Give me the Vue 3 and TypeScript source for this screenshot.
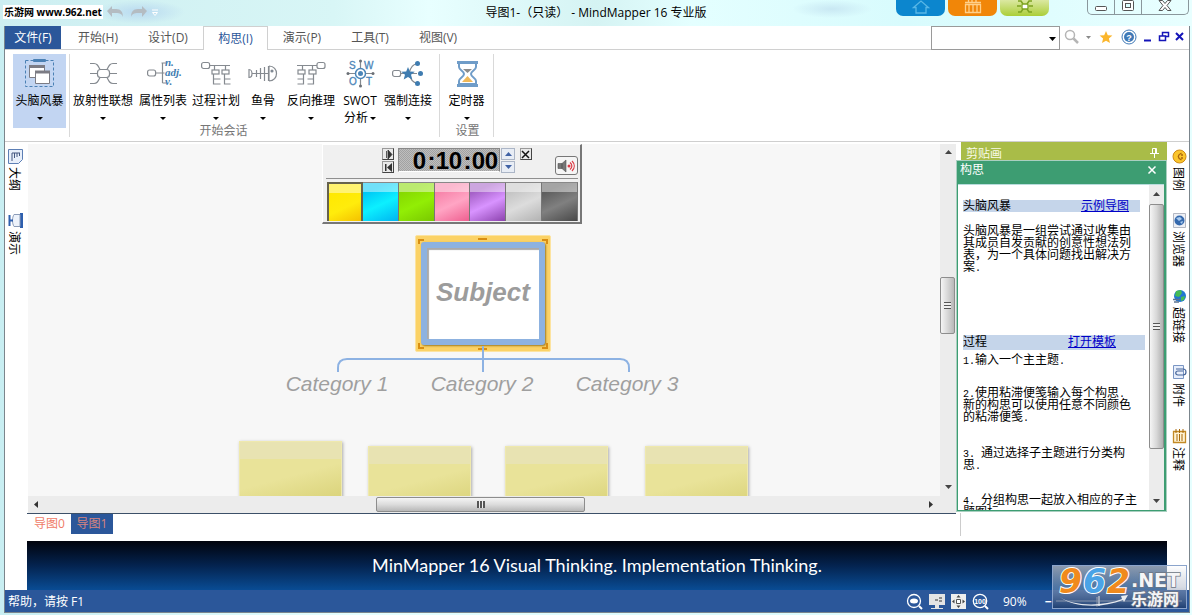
<script setup lang="ts">
interface RibbonItem {
  id: string
  label: string
  second?: string
  width: number
}

const tabs: { label: string; width: number; active?: boolean }[] = [
  { label: '开始(H)', width: 70 },
  { label: '设计(D)', width: 70 },
  { label: '构思(I)', width: 65, active: true },
  { label: '演示(P)', width: 68 },
  { label: '工具(T)', width: 68 },
  { label: '视图(V)', width: 68 },
]

const sessionItems: RibbonItem[] = [
  { id: 'radial', label: '放射性联想', width: 66 },
  { id: 'attr', label: '属性列表', width: 54 },
  { id: 'process', label: '过程计划', width: 52 },
  { id: 'fish', label: '鱼骨', width: 42 },
  { id: 'reverse', label: '反向推理', width: 54 },
  { id: 'swot', label: 'SWOT', second: '分析', width: 44 },
  { id: 'force', label: '强制连接', width: 52 },
]

const clock: { ch: string; kind: string }[] = [
  { ch: '', kind: 'digit' },
  { ch: '0', kind: 'digit' },
  { ch: ':', kind: 'colon' },
  { ch: '1', kind: 'digit' },
  { ch: '0', kind: 'digit' },
  { ch: ':', kind: 'colon' },
  { ch: '0', kind: 'digit' },
  { ch: '0', kind: 'digit' },
]

const swatches: { name: string; cls: string }[] = [
  { name: '黄色', cls: 'yellow' },
  { name: '青色', cls: 'cyan' },
  { name: '绿色', cls: 'green' },
  { name: '粉色', cls: 'pink' },
  { name: '紫色', cls: 'purple' },
  { name: '浅灰', cls: 'light' },
  { name: '深灰', cls: 'dark' },
]

const notes = [
  { x: 211, y: 297 },
  { x: 340, y: 302 },
  { x: 477, y: 302 },
  { x: 617, y: 302 },
]

const categories = [
  { label: 'Category 1', x: 309 },
  { label: 'Category 2', x: 454 },
  { label: 'Category 3', x: 599 },
]
</script>

<template>
  <div class="app">
    <header class="titlebar">
      <span class="mark">乐游网 www.962.net</span>
      <svg class="undo" width="60" height="16" viewBox="0 0 60 16" aria-hidden="true">
        <path d="M6 5h4c5 0 7 3 7 8-1-3-3-4-7-4H6v4L1 7l5-5z" fill="#b4bcc2" />
        <path d="M36 5h-4c-5 0-7 3-7 8 1-3 3-4 7-4h4v4l5-6-5-5z" fill="#b4bcc2" />
        <path d="M46 6h6M46.500 8.500h5l-2.500 3z" stroke="#fff" fill="none" />
      </svg>
      <h1 class="title">导图1-（只读） - MindMapper 16 专业版</h1>
      <div class="pills">
        <button class="pill blue" aria-label="主页">
          <svg width="18" height="14" viewBox="0 0 18 14"><path d="M1.500 7.500L9 1l7.500 6.500H14V13H4V7.500z" fill="none" stroke="#58b7e6" stroke-width="1.300" /></svg>
        </button>
        <button class="pill orange" aria-label="日历">
          <svg width="18" height="14" viewBox="0 0 18 14"><path d="M1.500 4.500h15v8h-15zM1 2.500h16M4.500 0v3M8 0v3M12 0v3M5 4.500v8M9 4.500v8M13 4.500v8" fill="none" stroke="#ffd08a" stroke-width="1.300" /></svg>
        </button>
        <button class="pill lime" aria-label="导图">
          <svg width="18" height="14" viewBox="0 0 18 14"><path d="M2 1h3l2 3M16 1h-3l-2 3M1 6h4M17 6h-4M2 12h3l2-3M16 12h-3l-2-3" fill="none" stroke="#7da321" stroke-width="1.500" /><rect x="6" y="4" width="6" height="5" rx="1" fill="#fff" stroke="#7da321" stroke-width="1.300" /></svg>
        </button>
      </div>
      <div class="winbtns">
        <button aria-label="最小化"><svg width="14" height="12"><rect x="1.500" y="6.500" width="11" height="4" rx="1" fill="#fff" stroke="#555" /></svg></button>
        <button aria-label="还原"><svg width="14" height="12"><rect x="1.500" y=".5" width="11" height="10" rx="1" fill="#fff" stroke="#555" /><rect x="4.500" y="3.500" width="5" height="4" fill="#dff" stroke="#555" /></svg></button>
        <button aria-label="关闭"><svg width="14" height="12"><path d="M1 .5h3.500L7 3.500 9.500.5H13L9 5.500l4 5H9.500L7 7.500l-2.500 3H1l4-5z" fill="#fff" stroke="#555" /></svg></button>
      </div>
    </header>

    <div class="window">
      <nav class="tabs">
        <button class="file">文件(F)</button>
        <button v-for="t in tabs" :key="t.label" class="tab" :class="{ active: t.active }" :style="{ width: t.width + 'px' }">{{ t.label }}</button>
        <span class="grow"></span>
        <span class="combo">
          <select class="find" aria-label="查找"><option></option></select>
          <svg width="7" height="4"><path d="M0 0h7L3.500 4z" fill="#000" /></svg>
        </span>
        <svg class="tool" width="60" height="20" viewBox="0 0 60 20" aria-hidden="true">
          <circle cx="10" cy="7" r="4.500" fill="none" stroke="#b5b5b5" stroke-width="1.500" />
          <path d="M13.500 10.500L18 15" stroke="#b5b5b5" stroke-width="2.500" />
          <path d="M26 8h5l-2.500 3z" fill="#8a8a8a" />
          <path d="M46 3l1.800 4.200 4.600.4-3.500 3 1.100 4.500-4-2.400-4 2.400 1.100-4.500-3.500-3 4.600-.4z" fill="#fbb62c" />
        </svg>
        <svg class="help" width="16" height="16" viewBox="0 0 16 16" role="img" aria-label="帮助">
          <circle cx="8" cy="8" r="7" fill="#fff" stroke="#3f79b7" /><circle cx="8" cy="8" r="5" fill="#3f79b7" />
          <text x="8" y="11.500" text-anchor="middle" font-size="9" font-weight="700" fill="#fff">?</text>
        </svg>
        <svg class="mdi" width="44" height="14" viewBox="0 0 44 14" aria-hidden="true">
          <path d="M1 10.500h7" stroke="#1414b8" stroke-width="2" />
          <path d="M19.500 2.500h6v4h-6zM19 2.500h7" fill="none" stroke="#1414b8" stroke-width="1.500" />
          <path d="M16.500 6h6v4.500h-6z" fill="#fff" stroke="#1414b8" stroke-width="1.500" />
          <path d="M33 3l7 7M40 3l-7 7" stroke="#1414b8" stroke-width="2" />
        </svg>
      </nav>

      <section class="ribbon">
        <button class="item selected">
          <svg width="32" height="32" viewBox="1 0 32 32">
            <rect x="2.500" y="3.500" width="28" height="26" fill="none" stroke="#4a80b4" stroke-dasharray="3 2" />
            <rect x="10" y="2" width="13" height="3" rx="1" fill="#4a80b4" />
            <path d="M6.500 8.500h15v12h-15z" fill="#fff" stroke="#7c7c84" /><path d="M6 9.500h16" stroke="#7c7c84" stroke-width="3" />
            <path d="M12.500 14.500h14v12h-14z" fill="#fff" stroke="#7c7c84" /><path d="M12 15h15" stroke="#7c7c84" stroke-width="3" />
          </svg>
          <span>头脑风暴</span><i class="caret"></i>
        </button>
        <div class="group">
          <div class="items">
            <button v-for="it in sessionItems" :key="it.id" class="item" :style="{ width: it.width + 'px' }">
              <svg width="32" height="32" viewBox="0 0 32 32" fill="none" stroke="#858a90" stroke-width="1.200">
                <g v-if="it.id === 'radial'">
                  <rect x="10.500" y="12.500" width="12" height="8" rx="3" />
                  <path d="M3 6.500h4c3 0 4 2 6 6M30 6.500h-4c-3 0-4 2-6 6M3 16.500h7M23 16.500h7M3 26.500h4c3 0 4-2 6-6M30 26.500h-4c-3 0-4-2-6-6" />
                </g>
                <g v-else-if="it.id === 'attr'">
                  <rect x=".6" y="13" width="8" height="6" rx="2" />
                  <path d="M9 16h6M15.500 6v20M15.500 6h-1M15.500 6h4M15.500 16h2M15.500 26h4" />
                  <g class="serif" fill="#3f7cb0" stroke="none" font-size="11"><text x="18" y="9">n.</text><text x="18" y="19">adj.</text><text x="18" y="28">v.</text></g>
                </g>
                <g v-else-if="it.id === 'process'">
                  <rect x="1.600" y="5.500" width="8" height="6" rx="2" />
                  <path d="M10 8.500h20M14.500 8v5M25.500 8v5M13.500 17v10h7M13.500 22h7M24.500 17v10h6M24.500 22h6" />
                  <rect x="12" y="13" width="7" height="4" fill="#fff" /><rect x="22" y="13" width="7" height="4" fill="#fff" />
                </g>
                <g v-else-if="it.id === 'fish'">
                  <path d="M2 12.500c4 0 4 8 0 8zM5 16.500h17M9.500 13v7M13.500 11v11M17.500 10v14M21.500 9v15M22 9c10 0 10 15 0 15M22 9v15" />
                  <circle cx="25" cy="14" r="1" fill="#1f5da0" />
                </g>
                <g v-else-if="it.id === 'reverse'">
                  <rect x="22" y="5.500" width="8" height="6" rx="2" />
                  <path d="M2 8.500h20M7.500 8v5M17.500 8v5M8.500 17v10h-6M8.500 22h-6M18.500 17v10h-6M18.500 22h-6" />
                  <rect x="3" y="13" width="7" height="4" fill="#fff" /><rect x="14" y="13" width="7" height="4" fill="#fff" />
                </g>
                <g v-else-if="it.id === 'swot'">
                  <path d="M16.500 3v8M16.500 22v8M3 16.500h8M22 16.500h8" /><circle cx="16.500" cy="16.500" r="5" stroke="#4b85b8" stroke-width="1.500" /><circle cx="16.500" cy="16.500" r="2.500" fill="#4b85b8" stroke="none" />
                  <g fill="#6b7076" stroke="none"><circle cx="16.500" cy="4" r="1.500" /><circle cx="16.500" cy="29" r="1.500" /><circle cx="4" cy="16.500" r="1.500" /><circle cx="29" cy="16.500" r="1.500" /></g>
                  <g class="sans" fill="#4b85b8" stroke="#4b85b8" stroke-width=".3" font-size="10"><text x="5" y="12">S</text><text x="20" y="12">W</text><text x="5" y="28">O</text><text x="22" y="28">T</text></g>
                </g>
                <g v-else>
                  <rect x=".6" y="13.500" width="8" height="6" rx="2" />
                  <path d="M9 16.500h16M17 16c2-7 5-9 8-9M17 17c2 7 5 9 8 9" />
                  <path d="M16 10l1.800 4.500 5 .3-3.800 3 1.300 4.700-4.300-2.600-4.300 2.600 1.300-4.700-3.800-3 5-.3z" fill="#3f7cb0" stroke="none" />
                  <g fill="#3f7cb0" stroke="none"><circle cx="25.500" cy="6.500" r="2.500" /><circle cx="28.500" cy="16.500" r="2.500" /><circle cx="25.500" cy="26.500" r="2.500" /></g>
                </g>
              </svg>
              <span>{{ it.label }}</span>
              <span v-if="it.second" class="second">{{ it.second }}<i class="caret"></i></span>
              <i v-else class="caret"></i>
            </button>
          </div>
          <div class="gname">开始会话</div>
        </div>
        <div class="group narrow">
          <div class="items">
            <button class="item timer">
              <svg width="32" height="32" viewBox="0 0 32 32">
                <path d="M8 6v4c0 3 5 4 5 7s-5 4-5 7v3h17v-3c0-3-5-4-5-7s5-4 5-7V6" fill="#fff" stroke="#6f9cc8" stroke-width="2" />
                <path d="M12 12h9l-4.500 4z" fill="#8c8c8c" /><path d="M11 25h11l-5.500-6z" fill="#f0b858" />
                <path d="M6 5.500h21M6 28.500h21" stroke="#6f9cc8" stroke-width="3" />
              </svg>
              <span>定时器</span><i class="caret"></i>
            </button>
          </div>
          <div class="gname">设置</div>
        </div>
      </section>

      <main class="body">
        <aside class="rail left">
          <button>
            <svg width="15" height="15"><path d="M.5.500h14v10l-4 4H.5z" fill="#e8effa" stroke="#5d7fb5" /><path d="M4 12V4h8M6.500 9V4M9 8V4M11.500 7V4" fill="none" stroke="#44577f" /></svg>
            <span>大纲</span>
          </button>
          <button>
            <svg width="15" height="15"><path d="M12 0h3v15h-3z" fill="#2e5fae" /><path d="M6 1.500h6v12H6c-2-3-2-9 0-12z" fill="#eef3fb" stroke="#8b9cb8" /><path d="M1.500 2v11M1 7.500h4" stroke="#2e5fae" stroke-width="2" /></svg>
            <span>演示</span>
          </button>
        </aside>

        <div class="center">
          <div class="stage">
            <div class="canvas">
              <div class="timerbox">
                <div class="clockrow">
                  <div class="pair">
                    <button class="mini" aria-label="播放"><svg width="9" height="9"><path d="M2.500 1v7M4 0v9l4-4.500z" stroke="#333" fill="#333" stroke-width=".8" /></svg></button>
                    <button class="mini" aria-label="重置"><svg width="9" height="9"><path d="M1 1h1.500v7H1zM8 0v9L3 4.500z" fill="#333" /></svg></button>
                  </div>
                  <div class="lcd"><span v-for="(c, i) in clock" :key="i" :class="c.kind">{{ c.ch }}</span></div>
                  <div class="spin">
                    <button aria-label="增加"><svg width="7" height="4"><path d="M0 4h7L3.500 0z" fill="#3f62a5" /></svg></button>
                    <button aria-label="减少"><svg width="7" height="4"><path d="M0 0h7L3.500 4z" fill="#3f62a5" /></svg></button>
                  </div>
                  <button class="mini close" aria-label="关闭计时器"><svg width="9" height="9"><path d="M1 1l7 7M8 1L1 8" stroke="#111" stroke-width="1.500" /></svg></button>
                  <button class="sound" aria-label="声音">
                    <svg width="18" height="14"><path d="M1 4.500h4v5H1zM5 4.500L9 1v12L5 9.500z" fill="#777" stroke="#555" stroke-width=".6" /><circle cx="12" cy="7" r="1.500" fill="#dc3c46" /><path d="M13 3.500c2.500 2 2.500 5 0 7M15 2c3 3 3 7 0 10" fill="none" stroke="#dc3c46" stroke-width="1.200" /></svg>
                  </button>
                </div>
                <div class="swatches">
                  <button v-for="s in swatches" :key="s.cls" class="swatch" :class="s.cls" :aria-label="s.name"></button>
                </div>
              </div>

              <svg class="links" width="294" height="30" viewBox="0 0 294 30" aria-hidden="true">
                <path d="M1 26v-4q0-9 9-9h273q9 0 9 9v4M146 0v26" fill="none" stroke="#8db2e3" stroke-width="2" />
              </svg>
              <div class="subject">
                <div class="paper">Subject</div>
                <svg class="handles" width="136" height="118" viewBox="0 0 136 118" aria-hidden="true">
                  <path d="M4 9V5h5M127 5h5v4M4 108v5h5M127 113h5v-5M63 4h9M63 114h9" fill="none" stroke="#d98e12" stroke-width="2" />
                </svg>
              </div>
              <span v-for="c in categories" :key="c.label" class="cat" :style="{ left: c.x + 'px' }">{{ c.label }}</span>
              <div v-for="(n, i) in notes" :key="i" class="note" :style="{ left: n.x + 'px', top: n.y + 'px' }"></div>
            </div>
            <div class="vscroll">
              <svg width="7" height="4"><path d="M0 4h7L3.500 0z" fill="#444" /></svg>
              <div class="vtrack"><div class="vthumb"><i class="grip"></i></div></div>
              <svg width="7" height="4"><path d="M0 0h7L3.500 4z" fill="#444" /></svg>
            </div>
          </div>
          <div class="hscroll">
            <svg width="4" height="7"><path d="M4 0v7L0 3.500z" fill="#333" /></svg>
            <div class="htrack"><div class="hthumb"><i class="hgrip"></i></div></div>
            <svg width="4" height="7"><path d="M0 0v7l4-3.500z" fill="#333" /></svg>
          </div>
          <div class="sheets">
            <button>导图0</button><button class="current">导图1</button>
          </div>
        </div>

        <aside class="side">
          <div class="clip"><span>剪贴画</span>
            <svg width="9" height="10"><path d="M2.500.500h4v5h-4zM0 5.500h9M4.500 6v4M5.500 1v4" fill="none" stroke="#fff" /></svg>
          </div>
          <section class="panel">
            <div class="phead"><span>构思</span><button aria-label="关闭构思"><svg width="8" height="8"><path d="M.5.500l7 7M7.500.500l-7 7" stroke="#fff" stroke-width="1.500" /></svg></button></div>
            <div class="pbody">
              <div class="doc">
                <div class="dhead first"><b>头脑风暴</b><a href="#sample">示例导图</a></div>
                <p class="intro">头脑风暴是一组尝试通过收集由<br>其成员自发贡献的创意性想法列<br>表，为一个具体问题找出解决方<br>案<i>.</i></p>
                <div class="dhead second"><b>过程</b><a href="#template">打开模板</a></div>
                <p class="s1"><i>1.</i>输入一个主主题<i>.</i></p>
                <p class="s2"><i>2.</i>使用粘滞便笺输入每个构思<i>.</i><br>新的构思可以使用任意不同颜色<br>的粘滞便笺<i>.</i></p>
                <p class="s3"><i>3. </i>通过选择子主题进行分类构<br>思<i>.</i></p>
                <p class="s4"><i>4. </i>分组构思一起放入相应的子主<br>题图标<i>.</i></p>
              </div>
              <div class="pscroll">
                <svg width="7" height="4"><path d="M0 4h7L3.500 0z" fill="#444" /></svg>
                <div class="ptrack"><div class="pthumb"><i class="grip"></i></div></div>
                <svg width="7" height="4"><path d="M0 0h7L3.500 4z" fill="#444" /></svg>
              </div>
            </div>
          </section>
          <div class="tail"></div>
        </aside>

        <aside class="rail right">
          <button>
            <svg width="15" height="15"><circle cx="7.500" cy="7.500" r="6.500" fill="#fbc52c" stroke="#cf8a12" /><path d="M9.500 4Q3 7.500 9.500 11" fill="none" stroke="#a9640c" stroke-width="1.300" /><path d="M9 6h2M9 9h2" stroke="#a9640c" stroke-width="1.300" /></svg>
            <span>图例</span>
          </button>
          <button>
            <svg width="15" height="15"><path d="M1.500.500h12v14h-12z" fill="#eef0f5" stroke="#b3b7c2" /><circle cx="7.500" cy="7.500" r="5" fill="#3569ad" /><path d="M4 5l4-1 2 2-3 2zM8 9l3-1-1 3z" fill="#a9cbef" /></svg>
            <span>浏览器</span>
          </button>
          <button>
            <svg width="15" height="15"><circle cx="8" cy="7" r="6" fill="#2176d2" /><path d="M4 2l5-1 1 3-3 4-4-1zM9 8l4-1-1 4-3 1z" fill="#45bb55" /><path d="M1 10.500h7M2 13h5" stroke="#5a718f" stroke-width="1.500" /></svg>
            <span>超链接</span>
          </button>
          <button>
            <svg width="15" height="15"><path d="M1.500.500h10v13h-10z" fill="#e7eefb" stroke="#7a96c4" /><path d="M4 4h7c4 0 4 6 0 6H6c-3 0-3-4 0-4h5" fill="none" stroke="#46659a" stroke-width="1.200" /></svg>
            <span>附件</span>
          </button>
          <button>
            <svg width="15" height="15"><path d="M1.500 2.500h12v11h-12z" fill="#fff3d4" stroke="#c38a26" stroke-width="1.300" /><path d="M4 0v4M7.500 0v4M11 0v4M5 5v7M7.500 5v7M10 5v7" stroke="#a8690a" /></svg>
            <span>注释</span>
          </button>
        </aside>
      </main>

      <div class="bannerwrap"><div class="banner">MinMapper 16 Visual Thinking. Implementation Thinking.</div></div>

      <footer class="status">
        <span class="grow">帮助，请按 F1</span>
        <svg width="84" height="18" viewBox="0 0 84 18" aria-hidden="true">
          <g fill="none" stroke="#fff" stroke-width="1.300"><circle cx="8" cy="8" r="6.500" /><path d="M13 13l3 3" stroke-width="2" /></g>
          <ellipse cx="8" cy="8" rx="4" ry="2.500" fill="#fff" />
          <path d="M23 1h16v11H23zM29 12h4v3h4v1H25v-1h4z" fill="#e4e4e4" /><path d="M29 7h3M33 5h3M33 8h3" stroke="#333" />
          <path d="M45 1h15v15H45z" fill="#eee" /><path d="M50.500 6.500h4v4h-4z" fill="#fff" stroke="#555" /><path d="M52.500 2l2 2.500h-4zM52.500 15l2-2.500h-4zM46 8.500l2.500-2v4zM59 8.500l-2.500-2v4z" fill="#444" />
          <g fill="none" stroke="#fff" stroke-width="1.300"><circle cx="74" cy="8" r="6.700" /><path d="M79 13l3 3" stroke-width="2" /></g>
          <text x="74" y="11" text-anchor="middle" class="hund">100</text>
        </svg>
        <output class="pct">90%</output>
        <label class="zoom"><span>−</span><input type="range" min="0" max="100" value="34" aria-label="缩放"></label>
      </footer>
    </div>

    <svg class="logo" width="136" height="45" viewBox="0 0 136 45" role="img" aria-label="962.NET 乐游网">
      <defs>
        <linearGradient id="lg" x1="0" y1="0" x2="0" y2="1"><stop offset="0" stop-color="#fff" stop-opacity=".55" /><stop offset=".5" stop-color="#a7b0c2" stop-opacity=".45" /><stop offset="1" stop-color="#17335f" stop-opacity=".7" /></linearGradient>
      </defs>
      <rect x=".5" y=".5" width="134" height="43" fill="url(#lg)" stroke="#8ba4cc" />
      <path d="M4 36h126" stroke="#8593ab" /><path d="M46 31h2v10h-2z" fill="#9ba8bd" />
      <path d="M8 32c12 9 42 10 62 2l-1-3 7-1-4 7-1-2c-22 9-51 7-63-3z" fill="#e8ebf0" />
      <g class="dejavu" font-weight="700" font-style="italic" font-size="33" stroke="#fff" stroke-width="2" paint-order="stroke">
        <text x="7" y="28" fill="#f08a1d">9</text><text x="31" y="28" fill="#4aa3e6">6</text><text x="55" y="28" fill="#f08a1d">2</text>
      </g>
      <g class="dejavu" font-weight="700" fill="#f4f5f7" stroke="#6c7584" stroke-width="1.500" paint-order="stroke">
        <text x="79" y="22" font-size="19">.NET</text><text x="79" y="40" font-size="16">乐游网</text>
      </g>
    </svg>
  </div>
</template>

<style>
html, body { height: 100%; }
body { margin: 0; background: #dcf6f8; }
</style>

<style scoped>
* { box-sizing: border-box; }
.app {
  position: relative; height: 100vh; min-height: 580px; display: flex; flex-direction: column; overflow: hidden;
  padding: 0 2px 2px 4px; color: #000; font: 12px/14px "Open Sans", "Noto Sans CJK SC", sans-serif;
  background: linear-gradient(90deg, #c8eef2, #e6ffff 30%, #dcfbfd 60%, #e6ffff);
}
button { border: 0; padding: 0; margin: 0; background: none; font: inherit; color: inherit; display: flex; align-items: center; justify-content: center; }
svg { display: block; flex: none; overflow: visible; }
.sans { font-family: "Liberation Sans", "Noto Sans CJK SC", sans-serif; }
.dejavu { font-family: "DejaVu Sans", "Noto Sans CJK SC", sans-serif; }
.serif { font-family: "Liberation Serif", serif; font-style: italic; font-weight: 700; }
.grow { flex: 1; }

.titlebar {
  display: grid; grid-template-columns: 1fr auto 1fr; position: relative; flex: none; height: 26px; margin: 0 -2px 0 -4px;
  background: radial-gradient(ellipse 45px 12px at 140px 12px, #b9d9f0, transparent), radial-gradient(ellipse 40px 9px at 832px 9px, #c9e8f3, transparent), linear-gradient(90deg, #cdeef1, #d8f6f6 28%, #e8ffff 36%, #d5f3f3 50%, #e4ffff 58%, #d8fbfd 76%, #e8ffff);
}
.mark { position: absolute; left: 3px; top: 5px; height: 14px; padding: 0 1px; background: #fff; font: 700 10px/14px "Open Sans", "Noto Sans CJK SC", sans-serif; white-space: nowrap; }
.undo { position: absolute; left: 106px; top: 4px; }
.title { grid-column: 2; margin: 0; font-size: 12px; line-height: 26px; font-weight: 400; white-space: nowrap; }
.pills { position: absolute; right: 143px; top: 0; display: flex; gap: 3px; }
.pill { width: 49px; height: 16px; border-radius: 0 0 7px 7px; align-items: flex-start; }
.blue { background: #0c86ce; } .orange { background: #f18608; } .lime { background: linear-gradient(#dbe8a2, #abce38); }
.winbtns { position: absolute; right: 3px; top: 0; height: 15px; display: flex; border: 1px solid #8a979c; border-top: 0; border-radius: 0 0 5px 5px; overflow: hidden; }
.winbtns button { width: 27px; align-items: flex-start; border-right: 1px solid #8a979c; }
.winbtns button:last-child { width: 46px; border: 0; }

.window { flex: 1; min-height: 0; display: flex; flex-direction: column; background: #fff; border: 1px solid #7b858c; border-top: 0; }
.tabs { flex: none; height: 24px; display: flex; align-items: stretch; border-bottom: 1px solid #d0d0d0; color: #555; padding-right: 2px; font-size: 12px; }
.file { width: 56px; margin-right: 2px; background: #2b579a; color: #fff; }
.tab.active { color: #2b579a; background: #fff; border: 1px solid #d0d0d0; border-bottom: 0; margin-bottom: -1px; }
.combo { position: relative; width: 129px; margin-bottom: -1px; }
.combo svg { position: absolute; right: 4px; top: 11px; }
.find { width: 100%; height: 24px; appearance: none; background: #fff; border: 1px solid #9a9a9a; border-radius: 0; }
.tool { margin-top: 2px; }
.help { margin: 3px 6px 0 1px; font-family: "Liberation Sans", sans-serif; }
.mdi { margin-top: 4px; }

.ribbon { flex: none; height: 92px; display: flex; border-bottom: 1px solid #cfcfcf; padding: 4px 0 0 8px; }
.item { flex-direction: column; justify-content: flex-start; height: 74px; padding-top: 3px; white-space: nowrap; }
.item > span { margin-top: 5px; line-height: 14px; }
.item > .second { display: flex; align-items: center; margin-top: 3px; gap: 2px; }
.item > .second .caret { margin: 0; }
.selected { width: 53px; background: #c2d5f2; margin-right: 3px; }
.caret { width: 0; height: 0; border: 3px solid transparent; border-top-color: #000; border-bottom: 0; margin-top: 9px; }
.group { position: relative; width: 370px; border-left: 1px solid #d9d9d9; margin-bottom: 4px; }
.narrow { width: 55px; border-right: 1px solid #d9d9d9; }
.items { display: flex; }
.timer { width: 53px; }
.gname { position: absolute; left: 0; right: 62px; bottom: -1px; text-align: center; color: #767676; line-height: 14px; }
.narrow .gname { right: 0; left: 2px; }

.body { flex: 1; min-height: 0; display: flex; }
.rail { flex: none; width: 22px; padding-top: 7px; display: flex; flex-direction: column; align-items: center; gap: 22px; }
.rail button { flex-direction: column; gap: 3px; }
.rail span { writing-mode: vertical-rl; text-orientation: sideways; line-height: 14px; font-family: "Noto Sans CJK SC", sans-serif; }
.left { padding-right: 2px; }
.right { padding-left: 2px; }
.center { flex: 1; min-width: 0; display: flex; flex-direction: column; }
.stage { flex: 1; min-height: 0; display: flex; padding: 2px 0 0 1px; }
.canvas { flex: 1; position: relative; overflow: hidden; background: #f7f7f7; }
.vscroll { width: 16px; flex: none; background: #ececec; display: flex; flex-direction: column; align-items: center; padding: 6px 0 7px; }
.vtrack { flex: 1; width: 100%; padding-top: 123px; }
.vthumb { width: 15px; height: 57px; border: 1px solid #8d8d8d; border-radius: 2px; background: linear-gradient(90deg, #f5f5f5, #d8d8d8 50%, #b8b8b8); display: grid; place-items: center; }
.grip { width: 7px; height: 7px; background: repeating-linear-gradient(#555 0 1px, #eee 1px 3px); }
.hscroll { flex: none; height: 17px; margin-left: 1px; background: #ececec; display: flex; align-items: center; padding: 0 23px 0 6px; }
.htrack { flex: 1; padding-left: 338px; }
.hthumb { width: 209px; height: 15px; border: 1px solid #8d8d8d; border-radius: 2px; background: linear-gradient(#f5f5f5, #dcdcdc 50%, #b8b8b8); display: grid; place-items: center; }
.hgrip { width: 8px; height: 7px; background: repeating-linear-gradient(90deg, #555 0 2px, #eee 2px 3px); }
.sheets { flex: none; height: 28px; border-top: 1px solid #3c5068; display: flex; align-items: flex-start; padding-left: 1px; color: #ef7b66; }
.sheets button { width: 43px; height: 20px; }
.sheets .current { width: 42px; background: #2b579a; color: #d9857e; }

.timerbox { position: absolute; left: 294px; top: 0; width: 260px; background: #f0f0f0; border: 1px solid #fff; border-right: 2px solid #777; border-bottom: 2px solid #777; padding: 3px 2px 1px 3px; }
.clockrow { height: 31px; display: flex; align-items: flex-start; padding-left: 56px; border-bottom: 1px solid #8f8f8f; }
.pair { width: 12px; display: grid; gap: 1px; margin-right: 4px; }
.mini { width: 12px; height: 12px; background: #e9e9e9; border: 1px solid #444; border-top-color: #999; border-left-color: #999; }
.lcd { display: flex; height: 24px; padding: 0 1px; background: repeating-conic-gradient(#bebebe 0 25%, #a2a2a2 0 50%) 0 0 / 2px 2px; border: 1px solid #888; border-bottom-color: #fff; font: 700 24px/23px "Liberation Sans", sans-serif; }
.digit { width: 13px; display: flex; justify-content: center; } .colon { width: 9px; margin-left: 1px; display: flex; justify-content: center; }
.spin { display: grid; gap: 1px; margin-left: 1px; }
.spin button { width: 14px; height: 12px; background: #e8edf5; border: 1px solid #abb5c6; }
.close { margin-left: 5px; }
.sound { width: 24px; height: 19px; margin: 8px 0 0 23px; border: 1px solid #777; border-radius: 3px; background: #f5f5f5; }
.swatches { display: grid; grid-template-columns: repeat(7, 1fr); margin: 3px 0 0 1px; }
.swatch { height: 39px; border-right: 1px solid #777; border-top: 1px solid #888; position: relative; }
.swatch::before { content: ""; position: absolute; inset: 0 0 auto; height: 9px; background: #ffffff70; }
.yellow { background: linear-gradient(155deg, #ffe800 15%, #ffec0c 60%, #f4c100); border: 2px solid #66624d; border-bottom: 0; }
.cyan { background: linear-gradient(155deg, #00c8f5 20%, #0cf0ff 55%, #00b4f0); }
.green { background: linear-gradient(155deg, #86d900 20%, #92ee05 55%, #79c800); }
.pink { background: linear-gradient(155deg, #f783a9 20%, #ffa5c4 55%, #ef5f90); }
.purple { background: linear-gradient(155deg, #a560c7 20%, #d893ff 55%, #8c42ae); }
.light { background: linear-gradient(155deg, #c4c4c4 20%, #dcdcdc 55%, #b2b2b2); }
.dark { background: linear-gradient(155deg, #5e5e5e 20%, #808080 55%, #484848); }

.subject { position: absolute; left: 387px; top: 91px; width: 136px; height: 117px; background: #fbd266; border: 1px solid #fce3a0; border-radius: 2px; padding: 6px 5px; }
.paper { height: 103px; border: 6px solid #8db2e0; border-radius: 3px; background: #fff; box-shadow: 1px 1px 2px #a07c20, inset 2px 2px 1px #aaa; display: grid; place-items: center; font: italic 700 26px/30px "Liberation Sans", sans-serif; color: #9c9c9c; padding-bottom: 4px; }
.handles { position: absolute; left: -1px; top: -1px; }
.links { position: absolute; left: 309px; top: 202px; z-index: 1; }
.cat { position: absolute; top: 228px; transform: translateX(-50%); white-space: nowrap; font: italic 21px/24px "Liberation Sans", sans-serif; color: #9f9f9f; }
.note { position: absolute; width: 103px; height: 100px; border: 1px solid #efe9ae; box-shadow: 1px 1px 3px #aaa; background: linear-gradient(#e8e3b2 17px, transparent 17px), linear-gradient(165deg, #e9e399 38%, #dbd47c 65%); }

.side { flex: none; width: 211px; display: flex; flex-direction: column; }
.clip { flex: none; height: 18px; margin-left: 5px; background: #a9bc48; color: #f8fae6; display: flex; justify-content: space-between; padding: 6px 8px 0 5px; line-height: 12px; }
.panel { flex: 1; min-height: 0; display: flex; flex-direction: column; border: 2px solid #3d9d72; outline: 1px solid #a9cfc0; outline-offset: -1px; border-width: 2px 3px 2px 2px; background: #fff; }
.phead { flex: none; height: 23px; background: #3d9d72; border-bottom: 1px solid #b8dcdc; color: #fff; display: flex; justify-content: space-between; padding: 0 8px 6px 2px; }
.phead span { line-height: 16px; }
.pbody { flex: 1; min-height: 0; display: flex; }
.doc { flex: 1; overflow: hidden; padding: 15px 0 0 5px; font: 12px/12px "Liberation Sans", "Noto Sans CJK SC", sans-serif; white-space: nowrap; }
.doc p { margin: 0; }
.doc i { font: 10px/0 "Liberation Mono", monospace; white-space: pre; }
.doc b { font-weight: 400; }
.dhead { display: flex; justify-content: space-between; background: #c5d5ea; height: 12px; margin-right: 9px; padding-right: 11px; }
.dhead.second { height: 15px; margin-right: 4px; padding-right: 29px; line-height: 14px; }
.doc a { color: #0000c8; text-decoration: underline; }
.doc .intro { padding: 13px 0 62px; }
.doc .s1 { padding-top: 4px; } .doc .s2 { padding-top: 21px; } .doc .s3 { padding-top: 24px; } .doc .s4 { padding-top: 23px; }
.pscroll { flex: none; width: 15px; background: #ececec; display: flex; flex-direction: column; align-items: center; padding: 7px 0; }
.ptrack { flex: 1; width: 100%; min-height: 0; padding: 8px 0 50px; }
.pthumb { height: 100%; border: 1px solid #8d8d8d; border-radius: 2px; background: linear-gradient(90deg, #f5f5f5, #d8d8d8 50%, #b0b0b0); display: grid; place-items: center; }
.tail { flex: none; height: 23px; margin: 1px 0 5px 4px; border-left: 1px solid #ccc; }

.bannerwrap { flex: none; padding: 0 22px; }
.banner { height: 49px; text-align: center; background: linear-gradient(#01030c, #04234f 50%, #094c94); color: #fff; font: 18px/49px Lato, sans-serif; font-variant-ligatures: none; }
.status { flex: none; height: 22px; background: #2b579a; color: #fff; display: flex; align-items: center; padding: 2px 0 0 3px; }
.hund { font: 700 7px "Liberation Sans", sans-serif; fill: #fff; }
.pct { margin: 0 16px 0 13px; width: 26px; }
.zoom { display: flex; align-items: center; width: 144px; }
.zoom span { font-weight: 700; }
.zoom input { margin: 0 0 0 4px; width: 120px; height: 10px; appearance: none; background: transparent; }
.zoom input::-webkit-slider-thumb { appearance: none; width: 2px; height: 10px; background: #9ba8bd; }
.logo { position: absolute; right: 4px; bottom: 5px; }
</style>
